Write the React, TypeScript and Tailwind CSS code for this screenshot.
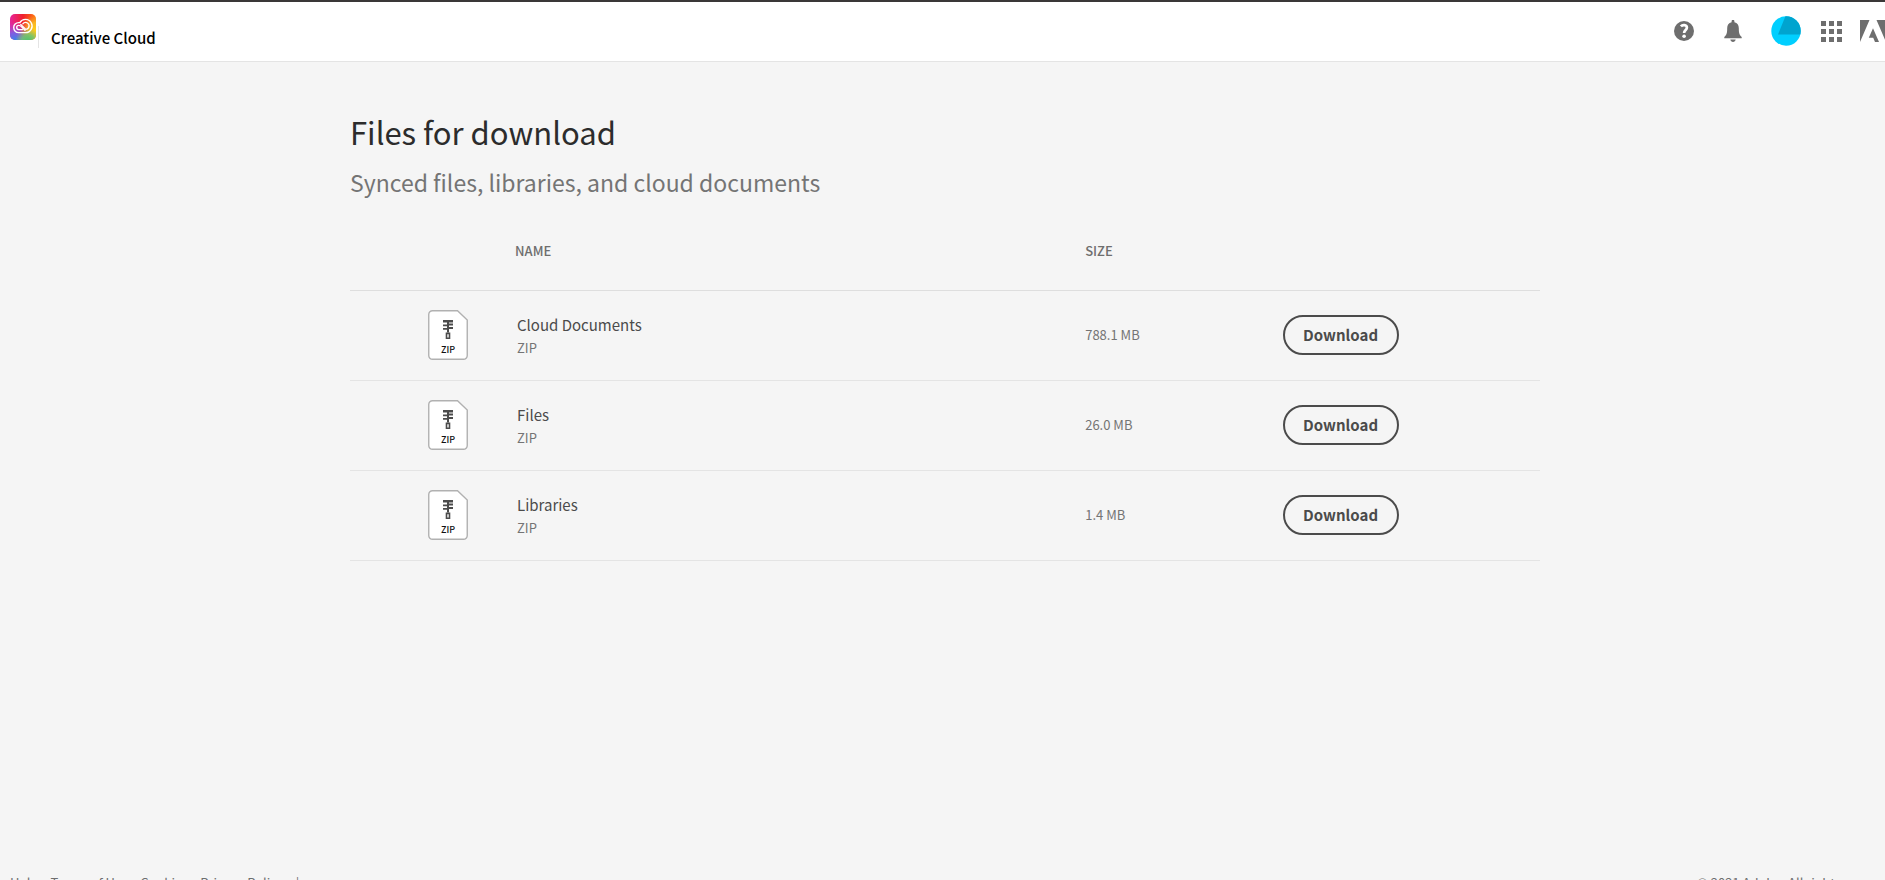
const files = [
  { name: "Cloud Documents", size: "788.1 MB" },
  { name: "Files", size: "26.0 MB" },
  { name: "Libraries", size: "1.4 MB" },
];

const legalLinks = ["Help", "Terms of Use", "Cookies", "Privacy Policy", "|"];

function CreativeCloudLogo() {
  return (
    <svg className="size-[26px] shrink-0" viewBox="0 0 26 26" aria-hidden="true">
      <defs>
        <linearGradient id="cc-base" x1="0" y1="0" x2="1" y2="0">
          <stop offset="0" stopColor="#e6249a" />
          <stop offset="0.5" stopColor="#f0202c" />
          <stop offset="1" stopColor="#ff7a10" />
        </linearGradient>
        <radialGradient id="cc-blue" cx="0.2" cy="1.05" r="0.75">
          <stop offset="0" stopColor="#2a8cf0" />
          <stop offset="0.45" stopColor="#7a62e8" stopOpacity="0.9" />
          <stop offset="1" stopColor="#c040e0" stopOpacity="0" />
        </radialGradient>
        <radialGradient id="cc-yellow" cx="1" cy="0.62" r="0.6">
          <stop offset="0" stopColor="#ffd21c" />
          <stop offset="0.5" stopColor="#f8c028" stopOpacity="0.85" />
          <stop offset="1" stopColor="#f8a028" stopOpacity="0" />
        </radialGradient>
        <radialGradient id="cc-green" cx="0.7" cy="1.05" r="0.5">
          <stop offset="0" stopColor="#4cc46a" />
          <stop offset="0.5" stopColor="#6cc870" stopOpacity="0.85" />
          <stop offset="1" stopColor="#8cc860" stopOpacity="0" />
        </radialGradient>
      </defs>
      <rect width="26" height="26" rx="5" fill="url(#cc-base)" />
      <rect width="26" height="26" rx="5" fill="url(#cc-blue)" />
      <rect width="26" height="26" rx="5" fill="url(#cc-yellow)" />
      <rect width="26" height="26" rx="5" fill="url(#cc-green)" />
      <g fill="none" stroke="#fff" strokeWidth="1.4" strokeLinecap="round">
        <path d="M15.5 18.600 H8.700 A5 5 0 0 1 8.700 8.600 H9.800 A6.600 6.600 0 1 1 15.500 18.600" />
        <path d="M12.400 15.600 H8.800 A2.100 2.100 0 0 1 8.800 11.400 C10.400 11.400 11 12.300 12 13.300 L15 16.200" />
        <path d="M12.800 9.800 A3.500 3.500 0 1 1 15.800 15.400 L10.800 10.600" />
      </g>
    </svg>
  );
}

function HelpIcon() {
  return (
    <svg className="size-5" viewBox="0 0 20 20" aria-hidden="true">
      <circle cx="10" cy="10" r="10" fill="#6e6e6e" />
      <path
        d="M6.9 5.3 C8.4 3.6 12.8 3.5 12.9 6.6 C13 8.8 10.1 9.2 10.1 12"
        fill="none"
        stroke="#fff"
        strokeWidth="2.7"
      />
      <circle cx="10.1" cy="15.200" r="1.800" fill="#fff" />
    </svg>
  );
}

function BellIcon() {
  return (
    <svg className="h-[22px] w-[18px]" viewBox="0 0 18 22" fill="#6e6e6e" aria-hidden="true">
      <path d="M7.6 1.2 A1.400 1.400 0 0 1 10.400 1.200 V2.200 C13.400 2.700 14.800 5 14.800 8 C14.800 13.500 15.500 15 17.700 17 V18.200 H0.300 V17 C2.500 15 3.200 13.500 3.200 8 C3.200 5 4.600 2.700 7.600 2.200 Z" />
      <path d="M6.300 19.500 H11.700 C11.400 21 10.400 21.900 9 21.900 C7.600 21.900 6.600 21 6.300 19.500 Z" />
    </svg>
  );
}

function Avatar() {
  return (
    <svg className="size-[30px]" viewBox="0 0 30 30" aria-hidden="true">
      <defs>
        <clipPath id="avatar-clip">
          <circle cx="15" cy="15" r="14.700" />
        </clipPath>
      </defs>
      <g clipPath="url(#avatar-clip)">
        <rect width="30" height="30" fill="#00cfff" />
        <path d="M14.500 0 H30 V18.500 H7 Z" fill="#00a4cf" />
      </g>
    </svg>
  );
}

function AppsIcon() {
  return (
    <svg className="size-[21px]" viewBox="0 0 21 21" fill="#6e6e6e" aria-hidden="true">
      {[0, 8, 16].map((y) =>
        [0, 8, 16].map((x) => <rect key={`${x}-${y}`} x={x} y={y} width="5" height="5" />),
      )}
    </svg>
  );
}

function AdobeLogo() {
  return (
    <svg className="h-[22px] w-[26px]" viewBox="0 0 26 22" fill="#6e6e6e" aria-hidden="true">
      <path d="M0 0 H9.500 L0 22 Z M16.500 0 H26 V22 Z M13 8.200 L19 22 H15 L13.200 17.700 H8.800 Z" />
    </svg>
  );
}

function ZipIcon() {
  return (
    <svg className="h-[50px] w-10" viewBox="0 0 40 50" aria-hidden="true">
      <path
        d="M4.500 0.750 H29.500 L39.250 10 V45.500 A3.750 3.750 0 0 1 35.500 49.250 H4.500 A3.750 3.750 0 0 1 0.750 45.500 V4.500 A3.750 3.750 0 0 1 4.500 0.750 Z"
        fill="#fff"
        stroke="#b1b1b1"
        strokeWidth="1.400"
      />
      <g fill="#4b4b4b">
        <path d="M15 10 H25 V12.500 H21 V13.500 H25 V15.500 H21 V17 H25 V19 H21 V22.500 H19 V19.700 H15 V18 H19 V16.200 H15 V14.500 H19 V12.500 H15 Z" />
        <path fillRule="evenodd" d="M17.700 22.500 H22.300 V29 H17.700 Z M19.300 24.300 H20.700 V27.500 H19.300 Z" />
      </g>
      <text
        x="20"
        y="43"
        textAnchor="middle"
        fontSize="9"
        fontWeight="500"
        fill="#111"
      >
        ZIP
      </text>
    </svg>
  );
}

export default function App() {
  return (
    <div className="flex h-screen flex-col overflow-hidden bg-[#f5f5f5] font-['Noto_Sans_CJK_SC','Noto_Sans',sans-serif] text-[#4b4b4b]">
      <header className="flex h-[62px] shrink-0 items-start justify-between border-t-2 border-b border-t-[#3a3838] border-b-[#e4e4e4] bg-white pl-[10px]">
        <div className="flex gap-0.5 pt-3">
          <CreativeCloudLogo />
          <div className="mt-3 h-[22px] border-l border-[#e4e4e4]" />
          <span className="mt-3 ml-[10px] text-[15px] leading-6 font-medium text-black">
            Creative Cloud
          </span>
        </div>
        <nav aria-label="Account" className="flex h-[58px] items-center">
          <button type="button" aria-label="Help" className="mr-[30px]">
            <HelpIcon />
          </button>
          <button type="button" aria-label="Notifications" className="mr-[29px]">
            <BellIcon />
          </button>
          <button type="button" aria-label="Profile" className="mr-5">
            <Avatar />
          </button>
          <button type="button" aria-label="Apps" className="mr-[18px]">
            <AppsIcon />
          </button>
          <a href="#adobe" aria-label="Adobe" className="-mr-px">
            <AdobeLogo />
          </a>
        </nav>
      </header>

      <main className="flex-1 pt-11 pl-[5px]">
        <div className="mx-auto max-w-[1190px]">
          <h1 className="text-[31px] leading-[52px] text-[#2c2c2c]">Files for download</h1>
          <p className="mt-1 text-[23px] leading-10 text-[#747474]">
            Synced files, libraries, and cloud documents
          </p>
          <table className="mt-7 w-full table-fixed border-collapse text-left">
            <colgroup>
              <col className="w-[164px]" />
              <col className="w-[48%]" />
              <col className="w-[16%]" />
              <col />
            </colgroup>
            <thead>
              <tr className="h-[60px] border-b border-[#dedede] align-top text-[13px] leading-[22px] text-[#6e6e6e]">
                <td />
                <th className="pt-2.5 pl-px font-medium">NAME</th>
                <th className="pt-2.5 font-medium">SIZE</th>
                <td />
              </tr>
            </thead>
            <tbody>
              {files.map((file) => (
                <tr key={file.name} className="h-[90px] border-b border-[#e4e4e4]">
                  <td className="pl-[78px]">
                    <ZipIcon />
                  </td>
                  <td className="pt-0.5 pl-[3px]">
                    <div className="text-[15px] leading-6">{file.name}</div>
                    <div className="text-[13px] leading-[22px] text-[#747474]">ZIP</div>
                  </td>
                  <td className="text-[13px] text-[#747474]">{file.size}</td>
                  <td className="pl-[7px]">
                    <button
                      type="button"
                      aria-label={`Download ${file.name}`}
                      className="h-10 w-[116px] rounded-full border-2 border-[#4b4b4b] text-[15px] leading-5 font-bold"
                    >
                      Download
                    </button>
                  </td>
                </tr>
              ))}
            </tbody>
          </table>
        </div>
      </main>

      <footer className="flex h-2 shrink-0 justify-between pr-11 pl-[10px] text-[13px] leading-[22px] text-[#6e6e6e]">
        <div className="flex gap-3">
          {legalLinks.map((label) => (
            <a key={label} href="#legal">
              {label}
            </a>
          ))}
        </div>
        <span>© 2021 Adobe. All rights</span>
      </footer>
    </div>
  );
}
